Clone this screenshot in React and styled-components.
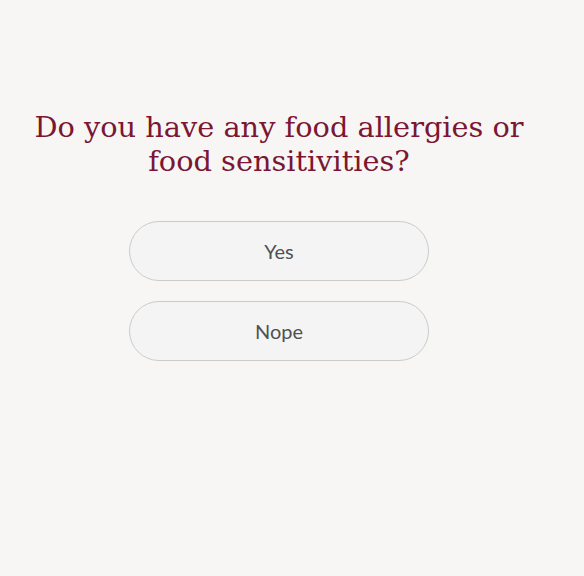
import React from 'react';
import styled, { createGlobalStyle } from 'styled-components';

const GlobalStyle = createGlobalStyle`
  html, body {
    margin: 0;
    padding: 0;
    background: #f7f6f5;
  }
`;

const Page = styled.div`
  width: 558px;
  min-height: 576px;
  padding-top: 110px;
  box-sizing: border-box;
  display: flex;
  flex-direction: column;
  align-items: center;
`;

const Question = styled.h1`
  margin: 0 0 43px;
  width: 510px;
  font-family: "DejaVu Serif", serif;
  font-weight: normal;
  font-size: 28.8px;
  line-height: 34px;
  color: #7b1633;
  text-align: center;
`;

const Options = styled.div`
  display: flex;
  flex-direction: column;
  gap: 20px;
`;

const Option = styled.button`
  width: 300px;
  height: 60px;
  border: 1px solid #cbcbcb;
  border-radius: 30px;
  background: #f4f4f4;
  font-family: Lato, sans-serif;
  font-size: 20px;
  color: #505050;
  cursor: pointer;
`;

export default function App() {
  return (
    <>
      <GlobalStyle />
      <Page>
        <Question>Do you have any food allergies or food sensitivities?</Question>
        <Options>
          <Option>Yes</Option>
          <Option>Nope</Option>
        </Options>
      </Page>
    </>
  );
}
